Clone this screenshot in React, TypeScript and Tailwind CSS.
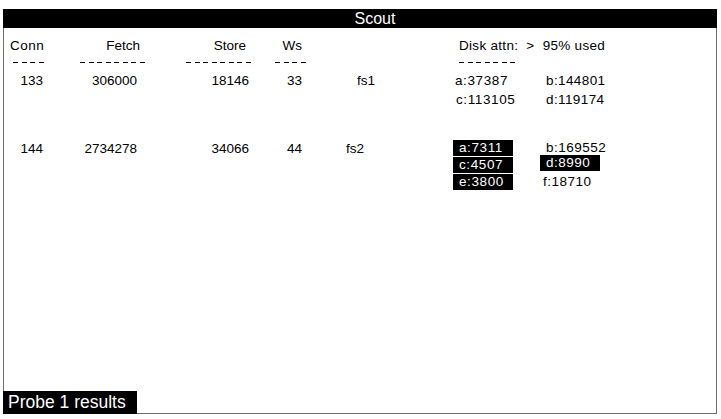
import React from 'react'

function Dashes({ n }: { n: number }) {
  return (
    <div className="flex gap-[3.5px] items-center h-full">
      {Array.from({ length: n }).map((_, i) => (
        <span key={i} className="block w-[5px] h-[1px] bg-black" />
      ))}
    </div>
  )
}

function Box({ children, className = '' }: { children: React.ReactNode; className?: string }) {
  return (
    <div className={`w-[60px] h-[16px] bg-black text-white pl-[6px] leading-[16px] ${className}`}>
      {children}
    </div>
  )
}

export default function App() {
  return (
    <div className="w-[721px] h-[419px] bg-white text-black font-['Liberation_Sans',Arial,sans-serif] overflow-hidden">
      <div className="ml-[3px] mt-[9px] w-[714px] h-[405px] flex flex-col">
        {/* title */}
        <div className="h-[19px] bg-black text-white text-center text-[16px] leading-[19px] pl-[30px]">Scout</div>

        <div className="relative flex-1 border-l border-r border-b border-[#6e6e6e] text-[13.5px]">
          {/* header */}
          <div className="grid grid-cols-[46px_95px_107px_56px_132px_100px_1fr] h-[16px] mt-[10px] leading-[16px]">
            <div className="pl-[6px] tracking-[0.5px]">Conn</div>
            <div className="text-right pr-[5px]">Fetch</div>
            <div className="text-right pr-[6px]">Store</div>
            <div className="text-right pr-[6px]">Ws</div>
            <div />
            <div className="col-span-2 pl-[19px] whitespace-pre tracking-[0.3px]">Disk attn:  &gt;  95% used</div>
          </div>

          {/* dashes */}
          <div className="grid grid-cols-[46px_95px_107px_56px_132px_100px_1fr] h-[16px]">
            <div className="pl-[9px]"><Dashes n={4} /></div>
            <div className="pl-[30px]"><Dashes n={8} /></div>
            <div className="pl-[41px]"><Dashes n={8} /></div>
            <div className="pl-[23px]"><Dashes n={4} /></div>
            <div />
            <div className="pl-[19px]"><Dashes n={7} /></div>
          </div>

          {/* fs1 */}
          <div className="grid grid-cols-[46px_95px_107px_56px_132px_100px_1fr] h-[17px] mt-[2px] leading-[17px]">
            <div className="text-right pr-[7px]">133</div>
            <div className="text-right pr-[8px]">306000</div>
            <div className="text-right pr-[3px]">18146</div>
            <div className="text-right pr-[6px]">33</div>
            <div className="pl-[49px]">fs1</div>
            <div className="pl-[15px] tracking-[0.6px]">a:37387</div>
            <div className="pl-[6px] tracking-[0.4px]">b:144801</div>
          </div>
          <div className="grid grid-cols-[46px_95px_107px_56px_132px_100px_1fr] h-[17px] mt-[2px] leading-[17px]">
            <div className="col-span-5" />
            <div className="pl-[16px] tracking-[0.6px]">c:113105</div>
            <div className="pl-[6px] tracking-[0.4px]">d:119174</div>
          </div>

          {/* fs2 */}
          <div className="grid grid-cols-[46px_95px_107px_56px_132px_100px_1fr] mt-[32px] leading-[17px]">
            <div className="text-right pr-[7px] h-[17px]">144</div>
            <div className="text-right pr-[8px]">2734278</div>
            <div className="text-right pr-[3px]">34066</div>
            <div className="text-right pr-[6px]">44</div>
            <div className="pl-[38px]">fs2</div>
            <div className="pl-[13px] flex flex-col gap-[1px] tracking-[0.6px]">
              <Box>a:7311</Box>
              <Box>c:4507</Box>
              <Box>e:3800</Box>
            </div>
            <div className="flex flex-col tracking-[0.5px]">
              <div className="pl-[6px] h-[15px] leading-[15px]">b:169552</div>
              <Box className="h-[16px]">d:8990</Box>
              <div className="pl-[3px] mt-[2px] h-[17px] leading-[17px]">f:18710</div>
            </div>
          </div>

          {/* footer tab */}
          <div className="absolute left-[-1px] bottom-[-1px] w-[134px] h-[23px] bg-black text-white text-[17.5px] leading-[23px] pl-[5px]">
            Probe 1 results
          </div>
        </div>
      </div>
    </div>
  )
}
